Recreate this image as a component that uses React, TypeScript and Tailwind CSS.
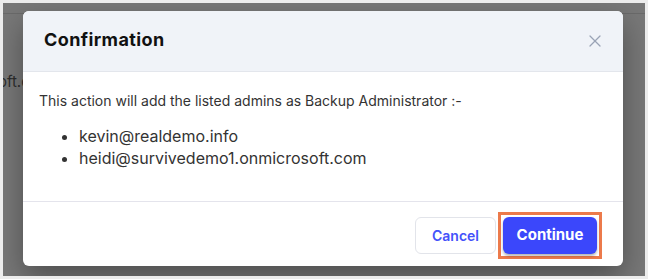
import { X } from 'lucide-react'

const admins = ['kevin@realdemo.info', 'heidi@survivedemo1.onmicrosoft.com']

export default function App() {
  return (
    <div className="w-[648px] h-[279px] bg-[#ececec] p-[3px] font-['Inter',sans-serif]">
      <div className="relative h-[273px] w-[642px] bg-[#787878] overflow-hidden">
        {/* dimmed page behind the modal */}
        <div className="h-[11px] border-b border-[#6a6a6a]" />
        <div className="mt-[57px] -ml-[13px] text-[15px] text-[#2e2e2e]">soft.com</div>

        <div className="absolute left-[20px] top-[8px] w-[600px] h-[255px] bg-white rounded-[6px] overflow-hidden shadow-[0_12px_30px_rgba(0,0,0,0.35)] flex flex-col">
          <div className="h-[61px] shrink-0 bg-[#f0f3f8] border-b border-[#e3e6ec] flex items-center justify-between pl-[21px] pr-[18px]">
            <h2 className="text-[18px] font-bold text-[#111] tracking-[0.4px] pb-[4px]">Confirmation</h2>
            <X size={20} strokeWidth={1.5} className="text-[#9aa3b5]" />
          </div>
          <div className="flex-1 pl-[16px] pt-[19px] text-[#333]">
            <p className="text-[14px] leading-[20px]">
              This action will add the listed admins as Backup Administrator :-
            </p>
            <ul className="list-disc pl-[40px] mt-[14px] text-[16px] leading-[22px]">
              {admins.map(a => (
                <li key={a}>{a}</li>
              ))}
            </ul>
          </div>
          <div className="h-[65px] shrink-0 border-t border-[#e4e4ec] flex items-center justify-end gap-[2px] pr-[21px] pt-[2px]">
            <button className="h-[37px] w-[81px] rounded-[6px] border border-[#e2e4ea] text-[#4352fa] text-[14px] font-semibold">
              Cancel
            </button>
            <div className="border-[3px] border-[#ec7a4b] px-[2px] py-[2px]">
              <button className="h-[37px] w-[94px] rounded-[6px] bg-[#3b47fb] text-white text-[15px] font-bold shadow-[0_2px_3px_rgba(0,0,0,0.3)]">
                Continue
              </button>
            </div>
          </div>
        </div>
      </div>
    </div>
  )
}
